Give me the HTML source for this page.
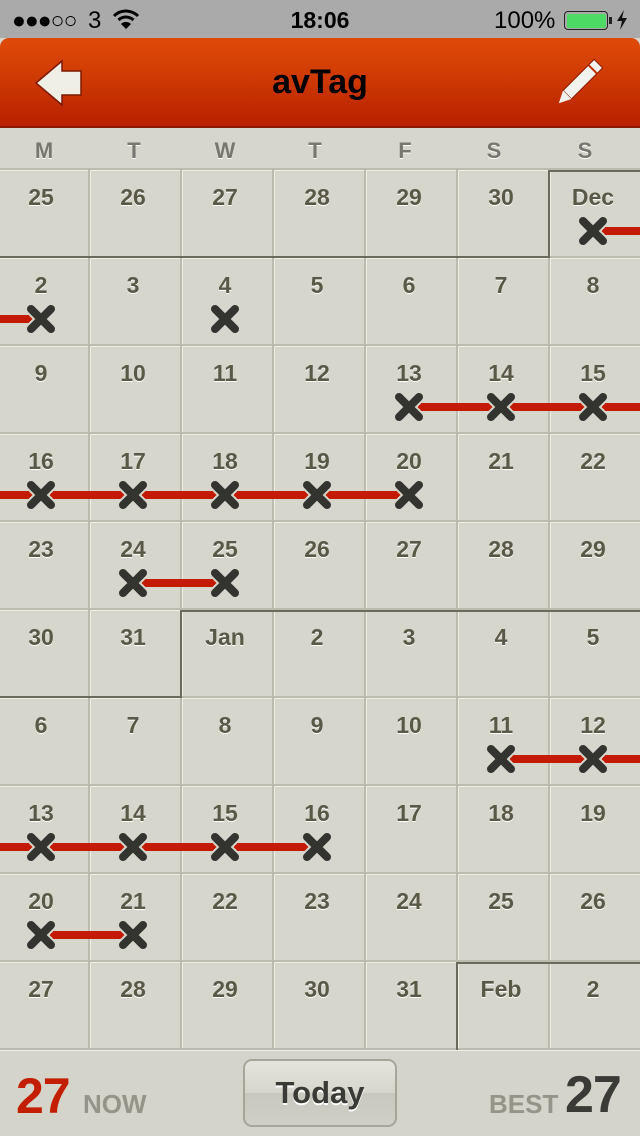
<!DOCTYPE html>
<html><head><meta charset="utf-8"><style>
*{margin:0;padding:0;box-sizing:border-box}
body{width:640px;height:1136px;overflow:hidden;background:#d6d6cc;font-family:"Liberation Sans",sans-serif;position:relative}
.sb{position:absolute;left:0;top:0;width:640px;height:38px;background:#aaa;color:#000;font-size:24px}
.hd{position:absolute;left:0;top:38px;width:640px;height:90px;border-radius:9px 9px 0 0;background:linear-gradient(#e04a08,#d03c04 40%,#b82000);border-bottom:2px solid #8a1800}
.hd h1{position:absolute;left:0;right:0;top:25px;text-align:center;font-size:34px;font-weight:bold;color:#000}
.wk{position:absolute;top:128px;left:0;width:640px;height:42px;background:#d6d6cc;border-bottom:2px solid #bcbcae}
.wk span{position:absolute;top:10px;width:92px;margin-left:-46px;text-align:center;font-weight:bold;font-size:22px;color:#777770;text-shadow:0 1px 0 #fff}
.r{position:absolute;left:0;width:640px;height:88px;overflow:hidden}
.c{position:absolute;top:0;height:88px;width:92px;border-right:2px solid #bcbcae;border-bottom:2px solid #bcbcae;box-shadow:inset 1px 1px 0 #efefe6;text-align:center;font-weight:bold;font-size:23px;color:#5a5846;padding-top:14px;padding-right:4px;text-shadow:0 1px 0 #fff}
.ln{position:absolute;height:8px;background:#c41a00;margin-top:-4px}
.x{position:absolute;width:32px;height:32px;margin:-16px 0 0 -16px}
.dk{position:absolute;background:#6c6a5a}
.bt{position:absolute;left:0;top:1050px;width:640px;height:86px;background:#d4d4ca;border-top:1px solid #efefe8}
</style></head><body>
<div class="sb">
<div style="position:absolute;left:12px;top:7px;font-size:23px;letter-spacing:-1px">●●●○○</div>
<div style="position:absolute;left:88px;top:7px">3</div>
<svg style="position:absolute;left:112px;top:9px" width="28" height="20" viewBox="0 0 28 20"><path d="M2 7 A17 17 0 0 1 26 7" stroke="#000" stroke-width="3" fill="none"/><path d="M6.5 11 A11 11 0 0 1 21.5 11" stroke="#000" stroke-width="3" fill="none"/><path d="M9 15 L14 20 L19 15 A7 7 0 0 0 9 15Z" fill="#000"/></svg>
<div style="position:absolute;left:0;right:0;top:7px;text-align:center;font-weight:bold;font-size:23px">18:06</div>
<div style="position:absolute;left:494px;top:7px">100%</div>
<div style="position:absolute;left:564px;top:11px;width:44px;height:19px;border:1.5px solid #222;border-radius:4px;padding:1.5px"><div style="width:100%;height:100%;background:#4cd964;border-radius:2px"></div></div>
<div style="position:absolute;left:609px;top:17px;width:3px;height:7px;background:#222"></div>
<svg style="position:absolute;left:616px;top:10px" width="12" height="20" viewBox="0 0 12 20"><path d="M8 0 L1 11 L6 11 L4 20 L11 8 L6 8Z" fill="#111"/></svg>
</div>
<div class="hd">
<svg style="position:absolute;left:30px;top:20px" width="56" height="50" viewBox="30 58 56 50"><path d="M36 83 L62 61 L62 71 L81 71 L81 95 L62 95 L62 105Z" fill="#efefe6" stroke="#7a1a00" stroke-width="1.5"/></svg>
<h1>avTag</h1>
<svg style="position:absolute;left:550px;top:14px" width="60" height="60" viewBox="550 52 60 60"><g transform="rotate(-45 580 82)"><rect x="562" y="76" width="44" height="12" fill="#f3f3ee" stroke="#8a1a00" stroke-width="1"/><path d="M562 76 L550 82 L562 88Z" fill="#f3f3ee"/><rect x="597" y="76" width="2" height="12" fill="#c03000"/></g></svg>
</div>
<div class="wk"><span style="left:44px">M</span><span style="left:134px">T</span><span style="left:225px">W</span><span style="left:315px">T</span><span style="left:405px">F</span><span style="left:494px">S</span><span style="left:585px">S</span></div>

<div class="r" style="top:170px"><div class="c" style="left:-2px">25</div><div class="c" style="left:90px">26</div><div class="c" style="left:182px">27</div><div class="c" style="left:274px">28</div><div class="c" style="left:366px">29</div><div class="c" style="left:458px">30</div><div class="c" style="left:550px">Dec</div></div>
<div class="r" style="top:258px"><div class="c" style="left:-2px">2</div><div class="c" style="left:90px">3</div><div class="c" style="left:182px">4</div><div class="c" style="left:274px">5</div><div class="c" style="left:366px">6</div><div class="c" style="left:458px">7</div><div class="c" style="left:550px">8</div></div>
<div class="r" style="top:346px"><div class="c" style="left:-2px">9</div><div class="c" style="left:90px">10</div><div class="c" style="left:182px">11</div><div class="c" style="left:274px">12</div><div class="c" style="left:366px">13</div><div class="c" style="left:458px">14</div><div class="c" style="left:550px">15</div></div>
<div class="r" style="top:434px"><div class="c" style="left:-2px">16</div><div class="c" style="left:90px">17</div><div class="c" style="left:182px">18</div><div class="c" style="left:274px">19</div><div class="c" style="left:366px">20</div><div class="c" style="left:458px">21</div><div class="c" style="left:550px">22</div></div>
<div class="r" style="top:522px"><div class="c" style="left:-2px">23</div><div class="c" style="left:90px">24</div><div class="c" style="left:182px">25</div><div class="c" style="left:274px">26</div><div class="c" style="left:366px">27</div><div class="c" style="left:458px">28</div><div class="c" style="left:550px">29</div></div>
<div class="r" style="top:610px"><div class="c" style="left:-2px">30</div><div class="c" style="left:90px">31</div><div class="c" style="left:182px">Jan</div><div class="c" style="left:274px">2</div><div class="c" style="left:366px">3</div><div class="c" style="left:458px">4</div><div class="c" style="left:550px">5</div></div>
<div class="r" style="top:698px"><div class="c" style="left:-2px">6</div><div class="c" style="left:90px">7</div><div class="c" style="left:182px">8</div><div class="c" style="left:274px">9</div><div class="c" style="left:366px">10</div><div class="c" style="left:458px">11</div><div class="c" style="left:550px">12</div></div>
<div class="r" style="top:786px"><div class="c" style="left:-2px">13</div><div class="c" style="left:90px">14</div><div class="c" style="left:182px">15</div><div class="c" style="left:274px">16</div><div class="c" style="left:366px">17</div><div class="c" style="left:458px">18</div><div class="c" style="left:550px">19</div></div>
<div class="r" style="top:874px"><div class="c" style="left:-2px">20</div><div class="c" style="left:90px">21</div><div class="c" style="left:182px">22</div><div class="c" style="left:274px">23</div><div class="c" style="left:366px">24</div><div class="c" style="left:458px">25</div><div class="c" style="left:550px">26</div></div>
<div class="r" style="top:962px"><div class="c" style="left:-2px">27</div><div class="c" style="left:90px">28</div><div class="c" style="left:182px">29</div><div class="c" style="left:274px">30</div><div class="c" style="left:366px">31</div><div class="c" style="left:458px">Feb</div><div class="c" style="left:550px">2</div></div>

<div class="dk" style="left:0;top:256px;width:549px;height:2px"></div>
<div class="dk" style="left:549px;top:170px;width:91px;height:2px"></div>
<div class="dk" style="left:548px;top:170px;width:2px;height:88px"></div>
<div class="dk" style="left:181px;top:610px;width:459px;height:2px"></div>
<div class="dk" style="left:180px;top:610px;width:2px;height:88px"></div>
<div class="dk" style="left:0;top:696px;width:182px;height:2px"></div>
<div class="dk" style="left:457px;top:962px;width:183px;height:2px"></div>
<div class="dk" style="left:456px;top:962px;width:2px;height:88px"></div>

<div class="ln" style="left:593px;width:47px;top:231px"></div>
<div class="ln" style="left:0;width:41px;top:319px"></div>
<div class="ln" style="left:409px;width:231px;top:407px"></div>
<div class="ln" style="left:0;width:409px;top:495px"></div>
<div class="ln" style="left:133px;width:92px;top:583px"></div>
<div class="ln" style="left:501px;width:139px;top:759px"></div>
<div class="ln" style="left:0;width:317px;top:847px"></div>
<div class="ln" style="left:41px;width:92px;top:935px"></div>

<svg width="0" height="0" style="position:absolute"><defs><g id="xx"><path d="M6 6 L26 26 M26 6 L6 26" stroke="#d6d6cc" stroke-width="12" stroke-linecap="round"/><path d="M6 6 L26 26 M26 6 L6 26" stroke="#333330" stroke-width="8" stroke-linecap="round"/></g></defs></svg>
<svg class="x" style="left:593px;top:231px"><use href="#xx"/></svg>
<svg class="x" style="left:41px;top:319px"><use href="#xx"/></svg>
<svg class="x" style="left:225px;top:319px"><use href="#xx"/></svg>
<svg class="x" style="left:409px;top:407px"><use href="#xx"/></svg>
<svg class="x" style="left:501px;top:407px"><use href="#xx"/></svg>
<svg class="x" style="left:593px;top:407px"><use href="#xx"/></svg>
<svg class="x" style="left:41px;top:495px"><use href="#xx"/></svg>
<svg class="x" style="left:133px;top:495px"><use href="#xx"/></svg>
<svg class="x" style="left:225px;top:495px"><use href="#xx"/></svg>
<svg class="x" style="left:317px;top:495px"><use href="#xx"/></svg>
<svg class="x" style="left:409px;top:495px"><use href="#xx"/></svg>
<svg class="x" style="left:133px;top:583px"><use href="#xx"/></svg>
<svg class="x" style="left:225px;top:583px"><use href="#xx"/></svg>
<svg class="x" style="left:501px;top:759px"><use href="#xx"/></svg>
<svg class="x" style="left:593px;top:759px"><use href="#xx"/></svg>
<svg class="x" style="left:41px;top:847px"><use href="#xx"/></svg>
<svg class="x" style="left:133px;top:847px"><use href="#xx"/></svg>
<svg class="x" style="left:225px;top:847px"><use href="#xx"/></svg>
<svg class="x" style="left:317px;top:847px"><use href="#xx"/></svg>
<svg class="x" style="left:41px;top:935px"><use href="#xx"/></svg>
<svg class="x" style="left:133px;top:935px"><use href="#xx"/></svg>

<div class="bt">
<div style="position:absolute;left:16px;top:16px;font-weight:bold;font-size:50px;color:#c41e00;letter-spacing:-1px">27</div>
<div style="position:absolute;left:83px;top:38px;font-weight:bold;font-size:26px;color:#949488">NOW</div>
<div style="position:absolute;left:243px;top:8px;width:154px;height:68px;border:2px solid #a6a698;border-radius:9px;background:linear-gradient(#e4e4dc,#d6d6cc 50%,#c8c8be 50%,#cfcfc6);text-align:center;line-height:64px;font-weight:bold;font-size:31px;color:#3a3a36;text-shadow:0 2px 0 #fff">Today</div>
<div style="position:absolute;left:489px;top:38px;font-weight:bold;font-size:26px;color:#949488">BEST</div>
<div style="position:absolute;left:565px;top:14px;font-weight:bold;font-size:52px;color:#3a3a36;letter-spacing:-1px">27</div>
</div>
</body></html>
